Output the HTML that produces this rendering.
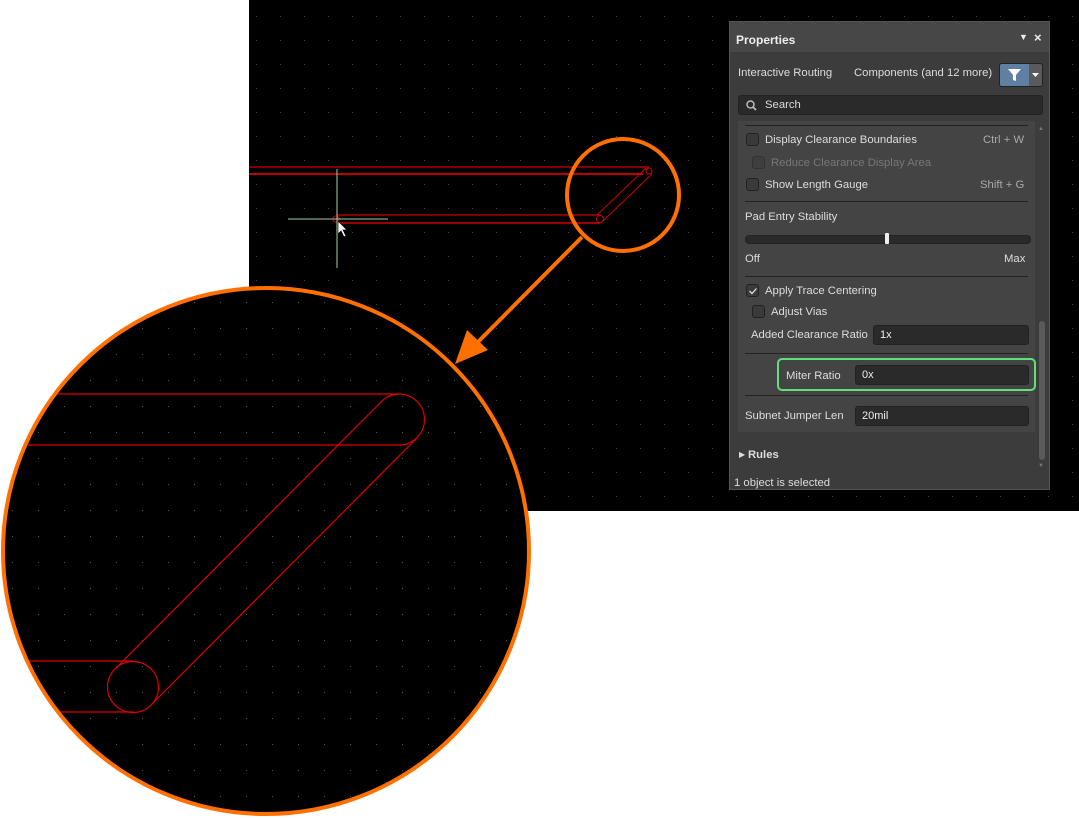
<!DOCTYPE html>
<html><head><meta charset="utf-8"><style>
html,body{margin:0;padding:0;width:1079px;height:818px;background:#fff;overflow:hidden;font-family:"Liberation Sans","DejaVu Sans",sans-serif;}
.canvas{position:absolute;left:249px;top:0;width:830px;height:511px;background:#000;}
.panel{position:absolute;left:729px;top:21px;width:321px;height:469px;background:#3c3c3c;border:1px solid #555;box-sizing:border-box;color:#ddd;font-size:11.3px;}
.abs{position:absolute;white-space:nowrap;}
.cb{position:absolute;width:13px;height:13px;border:1px solid #222;background:#3a3a3a;border-radius:3px;box-sizing:border-box;}
.inp{position:absolute;background:#2a2a2a;border:1px solid #222;border-radius:3px;box-sizing:border-box;color:#eee;padding-left:6px;line-height:18px;font-size:11px;}
.sep{position:absolute;height:1px;background:#222;}
</style></head><body>
<div class="canvas"></div>
<svg width="1079" height="818" style="position:absolute;left:0;top:0">
<defs><clipPath id="cl"><circle cx="266" cy="551" r="262"/></clipPath>
<pattern id="dots" width="26" height="26" patternUnits="userSpaceOnUse" x="0" y="4"><rect x="12" y="12" width="1" height="1" fill="#555"/></pattern>
<pattern id="dots2" width="24" height="24" patternUnits="userSpaceOnUse" x="6" y="6"><rect x="10" y="10" width="1" height="1" fill="#444"/></pattern></defs>
<rect x="249" y="0" width="830" height="511" fill="url(#dots2)"/>
<line x1="249" y1="167" x2="649" y2="167" stroke="#c00" stroke-width="1.2"/>
<line x1="249" y1="174" x2="643" y2="174" stroke="#b00" stroke-width="2"/>
<line x1="337" y1="215" x2="600" y2="215" stroke="#c00" stroke-width="1.2"/>
<line x1="337" y1="223" x2="600" y2="223" stroke="#c00" stroke-width="1.5"/>
<line x1="597" y1="215" x2="646" y2="168" stroke="#c00" stroke-width="1"/>
<line x1="603" y1="221" x2="652" y2="174" stroke="#c00" stroke-width="1"/>
<circle cx="600" cy="219" r="3.5" fill="none" stroke="#c00"/>
<circle cx="649" cy="171" r="3" fill="none" stroke="#c00"/>
<circle cx="336" cy="219" r="3" fill="none" stroke="#c00"/>
<line x1="288" y1="219" x2="388" y2="219" stroke="#aca" stroke-width="1"/>
<line x1="337" y1="169" x2="337" y2="268" stroke="#aca" stroke-width="1"/>
<path d="M338 221 L338 234 L341 231 L344 237 L346 236 L343 230 L347 230 Z" fill="#fff" stroke="#000" stroke-width="0.7"/>
<circle cx="623" cy="195" r="56" fill="none" stroke="#ff7000" stroke-width="4"/>
<line x1="582" y1="237" x2="472" y2="348" stroke="#ff7000" stroke-width="4"/>
<polygon points="455,364 467,330 488,350" fill="#ff7000"/>
<circle cx="266" cy="551" r="262" fill="#000"/>
<circle cx="266" cy="551" r="262" fill="url(#dots)"/>
<g clip-path="url(#cl)" fill="none" stroke="#d00" stroke-width="1.2">
<line x1="0" y1="394" x2="399" y2="394"/>
<line x1="0" y1="445" x2="399" y2="445"/>
<path d="M381 402 A25.5 25.5 0 0 1 399 394 A25.5 25.5 0 0 1 399 445"/>
<line x1="0" y1="661" x2="133" y2="661"/>
<line x1="0" y1="712" x2="133" y2="712"/>
<circle cx="133" cy="687" r="25.5"/>
<line x1="381" y1="402" x2="115" y2="669"/>
<line x1="417" y1="438" x2="151" y2="705"/>
</g>
<circle cx="266" cy="551" r="263" fill="none" stroke="#ff7000" stroke-width="4"/>
</svg>
<div class="panel">
 <div class="abs" style="left:0;top:0;width:319px;height:30px;background:#474747"></div>
 <div class="abs" style="left:6px;top:11px;font-weight:bold;font-size:12px;color:#eee">Properties</div>
 <div class="abs" style="left:289px;top:10px;font-size:9px;color:#eee">▼</div>
 <div class="abs" style="left:304px;top:8px;font-size:13px;font-weight:bold;color:#eee">×</div>
 <div class="abs" style="left:8px;top:45px">Interactive Routing</div>
 <div class="abs" style="left:124px;top:45px">Components (and 12 more)</div>
 <div class="abs" style="left:269px;top:41px;width:44px;height:24px;border:1px solid #222;border-radius:3px;background:#5a5a5a;box-sizing:border-box;overflow:hidden">
   <div style="position:absolute;left:0;top:0;width:29px;height:22px;background:#5f7fa3"></div>
   <svg width="44" height="22" style="position:absolute;left:0;top:0"><path d="M8 5 H21 L16 11 V17 L13 16 V11 Z" fill="#fff"/><path d="M32 9 H39 L35.5 13 Z" fill="#fff"/></svg>
 </div>
 <div class="abs" style="left:8px;top:73px;width:305px;height:20px;background:#2a2a2a;border:1px solid #222;border-radius:3px;box-sizing:border-box"></div>
 <svg class="abs" style="left:15px;top:77px" width="14" height="14"><circle cx="5.5" cy="5.5" r="3.5" fill="none" stroke="#bbb" stroke-width="1.5"/><line x1="8" y1="8" x2="11" y2="11" stroke="#bbb" stroke-width="1.8"/></svg>
 <div class="abs" style="left:35px;top:77px">Search</div>
 <div class="abs" style="left:8px;top:99px;width:297px;height:311px;background:#444"></div>
 <div class="sep" style="left:15px;top:103px;width:283px"></div>
 <div class="cb" style="left:16px;top:111px"></div>
 <div class="abs" style="left:35px;top:112px">Display Clearance Boundaries</div>
 <div class="abs" style="left:253px;top:112px;color:#aaa">Ctrl + W</div>
 <div class="cb" style="left:22px;top:134px;opacity:.5"></div>
 <div class="abs" style="left:41px;top:135px;color:#777">Reduce Clearance Display Area</div>
 <div class="cb" style="left:16px;top:156px"></div>
 <div class="abs" style="left:35px;top:157px">Show Length Gauge</div>
 <div class="abs" style="left:250px;top:157px;color:#aaa">Shift + G</div>
 <div class="sep" style="left:15px;top:179px;width:283px"></div>
 <div class="abs" style="left:15px;top:189px">Pad Entry Stability</div>
 <div class="abs" style="left:15px;top:213px;width:284px;height:7px;background:#2a2a2a;border:1px solid #222;border-radius:4px"></div>
 <div class="abs" style="left:155px;top:211px;width:4px;height:11px;background:#eee;border-radius:1px"></div>
 <div class="abs" style="left:15px;top:231px">Off</div>
 <div class="abs" style="left:274px;top:231px">Max</div>
 <div class="sep" style="left:15px;top:254px;width:283px"></div>
 <div class="cb" style="left:16px;top:262px"></div>
 <svg class="abs" style="left:18px;top:264px" width="10" height="10"><path d="M1.5 5 L4 7.5 L8.5 2.5" fill="none" stroke="#ddd" stroke-width="1.3"/></svg>
 <div class="abs" style="left:35px;top:263px">Apply Trace Centering</div>
 <div class="cb" style="left:22px;top:283px"></div>
 <div class="abs" style="left:41px;top:284px">Adjust Vias</div>
 <div class="abs" style="left:21px;top:307px">Added Clearance Ratio</div>
 <div class="inp" style="left:143px;top:303px;width:156px;height:20px">1x</div>
 <div class="sep" style="left:15px;top:331px;width:283px"></div>
 <div class="abs" style="left:47px;top:336px;width:259px;height:33px;border:2px solid #5fe07a;border-radius:5px;box-sizing:border-box"></div>
 <div class="abs" style="left:56px;top:348px">Miter Ratio</div>
 <div class="inp" style="left:125px;top:343px;width:174px;height:20px">0x</div>
 <div class="sep" style="left:15px;top:373px;width:283px"></div>
 <div class="abs" style="left:15px;top:388px">Subnet Jumper Len</div>
 <div class="inp" style="left:125px;top:384px;width:174px;height:20px">20mil</div>
 <div class="abs" style="left:308px;top:104px;font-size:6px;color:#777">▲</div>
 <div class="abs" style="left:309px;top:299px;width:6px;height:139px;background:#5a5a5a;border-radius:3px"></div>
 <div class="abs" style="left:308px;top:441px;font-size:6px;color:#777">▼</div>
 <div class="abs" style="left:9px;top:428px;font-size:8px">▶</div>
 <div class="abs" style="left:18px;top:427px;font-weight:bold">Rules</div>
 <div class="abs" style="left:4px;top:455px">1 object is selected</div>
</div>
</body></html>
